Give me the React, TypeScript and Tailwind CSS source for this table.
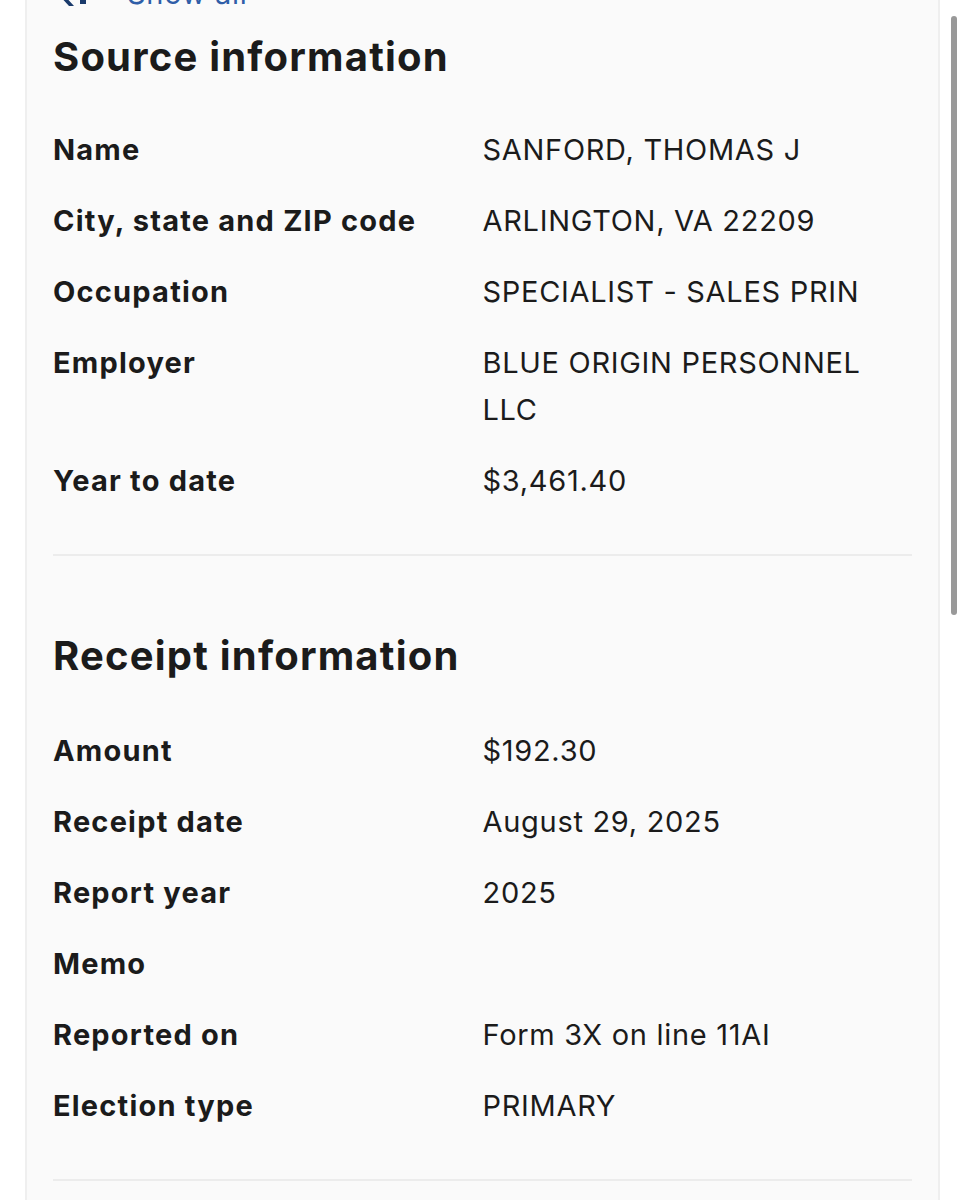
const sourceRows: [string, string][] = [
  ['Name', 'SANFORD, THOMAS J'],
  ['City, state and ZIP code', 'ARLINGTON, VA 22209'],
  ['Occupation', 'SPECIALIST - SALES PRIN'],
  ['Employer', 'BLUE ORIGIN PERSONNEL LLC'],
  ['Year to date', '$3,461.40'],
]

const receiptRows: [string, string][] = [
  ['Amount', '$192.30'],
  ['Receipt date', 'August 29, 2025'],
  ['Report year', '2025'],
  ['Memo', ''],
  ['Reported on', 'Form 3X on line 11AI'],
  ['Election type', 'PRIMARY'],
]

function Section({ title, rows, gap }: { title: string; rows: [string, string][]; gap: string }) {
  return (
    <section>
      <h2 className="text-[40px] leading-[56px] font-bold text-[#1b1b1b] tracking-[1.2px]">{title}</h2>
      <dl className={`${gap} grid grid-cols-2 gap-y-[24px] text-[29px] leading-[47px] text-[#1b1b1b]`}>
        {rows.map(([label, value]) => (
          <div key={label} className="contents">
            <dt className="font-bold tracking-[1.2px] pr-4">{label}</dt>
            <dd className="tracking-[0.7px] pr-6">{value}</dd>
          </div>
        ))}
      </dl>
      <div className="mt-[50px] h-[2px] bg-[#ececec]" />
    </section>
  )
}

export default function App() {
  return (
    <div
      className="relative min-h-[1200px] overflow-hidden bg-white"
      style={{ fontFamily: 'Inter, "Noto Sans", sans-serif' }}
    >
      <div className="ml-[25px] mr-[26px] -mt-[26px] min-h-[1300px] border-x-2 border-[#efefef] bg-[#fafafa] px-[26px]">
        <div className="flex h-[40px] items-center gap-[40px] pl-[2px]">
          <svg width="32" height="28" viewBox="0 0 32 28" className="text-[#1a3a6b]">
            <path d="M14 2 3 14l11 12h5L8 14 19 2z M25 4h6v20h-6z" fill="currentColor" />
          </svg>
          <span className="text-[29px] tracking-[0.7px] text-[#2f5ea8]">Show all</span>
        </div>
        <div className="pt-[15px]">
          <Section title="Source information" rows={sourceRows} gap="mt-[41px]" />
          <div className="h-[72px]" />
          <Section title="Receipt information" rows={receiptRows} gap="mt-[43px]" />
        </div>
      </div>
      <div className="absolute left-[951px] top-[16px] h-[599px] w-[6px] rounded-full bg-[#999999]" />
    </div>
  )
}
